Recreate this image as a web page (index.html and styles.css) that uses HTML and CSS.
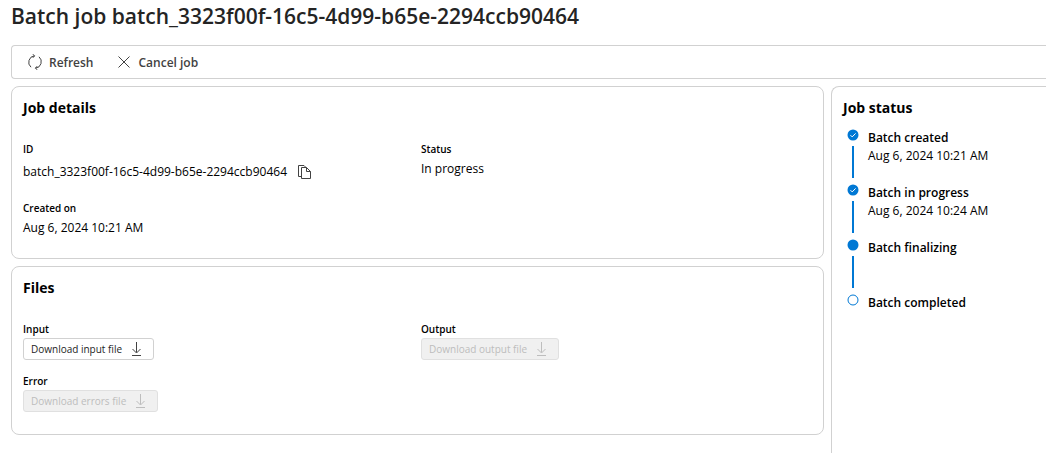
FILE: index.html
```html
<!DOCTYPE html>
<html lang="en">

<head>
    <meta charset="UTF-8">
    <meta name="viewport" content="width=device-width, initial-scale=1.0">
    <title>Batch job</title>
    <link rel="stylesheet" href="styles.css">
</head>

<body>

    <h1>Batch job batch_3323f00f-16c5-4d99-b65e-2294ccb90464</h1>

    <div class="toolbar">
        <button type="button" class="command">
            <svg class="icon" viewBox="0 0 16 16" width="16" height="16">
                <path d="M4 13.2A6.5 6.5 0 0 1 7.5 1.8M12 2.8A6.5 6.5 0 0 1 8.5 14.2M5.6 0.2L7.6 1.8L5.9 3.8M10.4 15.8L8.4 14.2L10.1 12.2" />
            </svg>
            Refresh
        </button>
        <button type="button" class="command">
            <svg class="icon" viewBox="0 0 16 16" width="16" height="16">
                <path d="M2.5 2.5L13.5 13.5M13.5 2.5L2.5 13.5" />
            </svg>
            Cancel job
        </button>
    </div>

    <div class="content">
        <main class="main">
            <section class="card details">
                <h2>Job details</h2>
                <div class="columns">
                    <div>
                        <div class="label">ID</div>
                        <div class="value id-value">
                            batch_3323f00f-16c5-4d99-b65e-2294ccb90464
                            <button type="button" class="copy" aria-label="Copy ID">
                                <svg class="icon" viewBox="0 0 16 16" width="16" height="16">
                                    <path d="M5.5 12.5H2.5V1.5H8L10 3.5M5.5 3.5H10.5L14.5 7.5V14.5H5.5ZM10.5 3.5V7.5H14.5" />
                                </svg>
                            </button>
                        </div>
                    </div>
                    <div>
                        <div class="label">Status</div>
                        <div class="value">In progress</div>
                    </div>
                    <div>
                        <div class="label">Created on</div>
                        <div class="value">Aug 6, 2024 10:21 AM</div>
                    </div>
                </div>
            </section>

            <section class="card files">
                <h2>Files</h2>
                <div class="columns">
                    <div>
                        <div class="label">Input</div>
                        <button type="button" class="download">
                            Download input file
                            <svg class="icon" viewBox="0 0 16 16" width="16" height="16">
                                <path d="M8.5 1V11.5M4.5 8L8.5 12L12.5 8M4 14.5H13" />
                            </svg>
                        </button>
                    </div>
                    <div>
                        <div class="label">Output</div>
                        <button type="button" class="download" disabled>
                            Download output file
                            <svg class="icon" viewBox="0 0 16 16" width="16" height="16">
                                <path d="M8.5 1V11.5M4.5 8L8.5 12L12.5 8M4 14.5H13" />
                            </svg>
                        </button>
                    </div>
                    <div>
                        <div class="label">Error</div>
                        <button type="button" class="download" disabled>
                            Download errors file
                            <svg class="icon" viewBox="0 0 16 16" width="16" height="16">
                                <path d="M8.5 1V11.5M4.5 8L8.5 12L12.5 8M4 14.5H13" />
                            </svg>
                        </button>
                    </div>
                </div>
            </section>
        </main>

        <aside class="card status">
            <h2>Job status</h2>
            <ol class="steps">
                <li class="step">
                    <svg class="dot" viewBox="0 0 12 12" width="12" height="12">
                        <circle cx="6" cy="6" r="5.5" />
                        <path d="M3.5 6.2L5.2 7.9L8.6 4.4" />
                    </svg>
                    <div class="step-name">Batch created</div>
                    <div class="value">Aug 6, 2024 10:21 AM</div>
                </li>
                <li class="step">
                    <svg class="dot" viewBox="0 0 12 12" width="12" height="12">
                        <circle cx="6" cy="6" r="5.5" />
                        <path d="M3.5 6.2L5.2 7.9L8.6 4.4" />
                    </svg>
                    <div class="step-name">Batch in progress</div>
                    <div class="value">Aug 6, 2024 10:24 AM</div>
                </li>
                <li class="step">
                    <svg class="dot" viewBox="0 0 12 12" width="12" height="12">
                        <circle cx="6" cy="6" r="5.5" />
                    </svg>
                    <div class="step-name">Batch finalizing</div>
                </li>
                <li class="step pending">
                    <svg class="dot" viewBox="0 0 12 12" width="12" height="12">
                        <circle cx="6" cy="6" r="5" />
                    </svg>
                    <div class="step-name">Batch completed</div>
                </li>
            </ol>
        </aside>
    </div>

</body>

</html>
```

FILE: styles.css
```css
* {
    box-sizing: border-box;
}

body {
    display: flex;
    flex-direction: column;
    min-height: 100vh;
    margin: 0;
    padding-left: 11px;
    background-color: #fff;
    color: #000;
    font-family: "Segoe UI", "Open Sans", "Noto Sans", sans-serif;
    font-size: 12px;
    line-height: 18px;
}

h1 {
    margin: 2px 0 15px;
    color: #242424;
    font-size: 21px;
    font-weight: 600;
    line-height: 28px;
}

h2 {
    margin: 0;
    font-size: 14px;
    font-weight: 700;
    line-height: 20px;
}

button {
    font-family: inherit;
    cursor: pointer;
}

.icon {
    flex: none;
    fill: none;
    stroke: #424242;
    stroke-width: 1;
}

.toolbar {
    display: flex;
    gap: 23px;
    height: 34px;
    padding-left: 15px;
    border: 1px solid #d1d1d1;
    border-right: none;
    border-radius: 4px 0 0 4px;
}

.command {
    display: flex;
    align-items: center;
    gap: 6px;
    padding: 0;
    border: none;
    background: none;
    color: #424242;
    font-size: 12px;
    font-weight: 600;
}

.content {
    display: grid;
    flex: 1;
    grid-template-columns: minmax(0, 1fr) 215px;
    gap: 7px;
    margin-top: 7px;
}

.main {
    display: flex;
    flex-direction: column;
    gap: 7px;
}

.card {
    padding: 11px;
    border: 1px solid #d1d1d1;
    border-radius: 8px;
}

.details {
    padding-bottom: 20px;
}

.files {
    padding-bottom: 22px;
}

.columns {
    display: grid;
    grid-template-columns: 1fr 1fr;
    column-gap: 7px;
    row-gap: 14px;
    margin-top: 22px;
}

.files .columns {
    row-gap: 12px;
}

.label {
    font-size: 10px;
    font-weight: 600;
    line-height: 18px;
}

.value {
    line-height: 20px;
}

.label + .value {
    margin-top: 1px;
}

.id-value {
    display: flex;
    align-items: center;
    gap: 9px;
    height: 26px;
}

.copy {
    display: flex;
    padding: 0;
    border: none;
    background: none;
}

.download {
    display: flex;
    align-items: center;
    gap: 6px;
    height: 22px;
    padding: 0 9px 0 7px;
    border: 1px solid #d1d1d1;
    border-radius: 3px;
    background-color: #fff;
    color: #242424;
    font-size: 10px;
}

.download:disabled {
    border-color: #e0e0e0;
    background-color: #f0f0f0;
    color: #bdbdbd;
    cursor: default;
}

.download:disabled .icon {
    stroke: #bdbdbd;
}

.status {
    border-right: none;
    border-bottom: none;
    border-radius: 8px 0 0 0;
}

.steps {
    margin: 11px 0 0;
    padding: 0 0 0 4px;
    list-style: none;
}

/* dot on top, line down to the next step */
.step {
    display: grid;
    grid-template-columns: 12px 1fr;
    grid-template-rows: 17px 18px;
    column-gap: 9px;
    height: 55px;
}

.step::before {
    content: "";
    grid-column: 1;
    grid-row: 2 / 4;
    justify-self: center;
    width: 2px;
    height: 32px;
    background-color: #0078d4;
}

.pending::before {
    display: none;
}

.dot {
    grid-column: 1;
    grid-row: 1;
    fill: #0078d4;
}

.dot path {
    fill: none;
    stroke: #fff;
}

.pending .dot {
    fill: #fff;
    stroke: #0078d4;
}

.step-name {
    grid-column: 2;
    grid-row: 1;
    font-weight: 600;
}

.step .value {
    grid-column: 2;
    grid-row: 2;
}
```
